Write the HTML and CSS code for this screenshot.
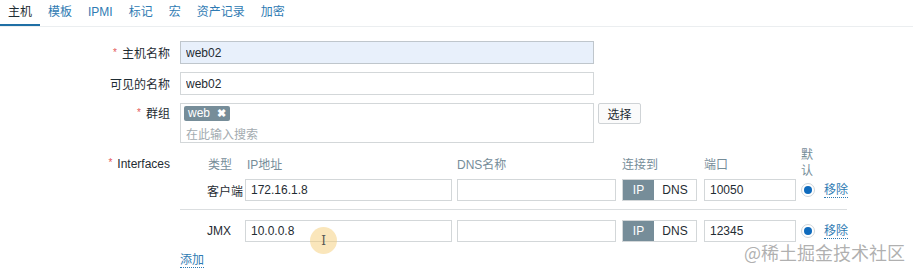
FILE: index.html
```html
<!DOCTYPE html>
<html lang="zh-CN">
<head>
    <meta charset="UTF-8">
    <title>主机</title>
    <link rel="stylesheet" href="styles.css">
</head>
<body>
    <div class="tabs">
        <span class="tab active">主机</span>
        <span class="tab">模板</span>
        <span class="tab">IPMI</span>
        <span class="tab">标记</span>
        <span class="tab">宏</span>
        <span class="tab">资产记录</span>
        <span class="tab">加密</span>
    </div>

    <div class="form">
        <div class="form-row">
            <label class="form-label required">主机名称</label>
            <input class="text-field wide focused" type="text" value="web02">
        </div>
        <div class="form-row">
            <label class="form-label">可见的名称</label>
            <input class="text-field wide" type="text" value="web02">
        </div>
        <div class="form-row group-row">
            <label class="form-label required">群组</label>
            <div class="multiselect">
                <span class="tag">web <span class="tag-x">&#10006;</span></span>
                <span class="placeholder">在此输入搜索</span>
            </div>
            <button class="btn">选择</button>
        </div>
        <div class="form-row iface-row">
            <label class="form-label required">Interfaces</label>
            <div class="iface-table">
                <div class="iface-head">
                    <span>类型</span>
                    <span class="pad">IP地址</span>
                    <span>DNS名称</span>
                    <span>连接到</span>
                    <span>端口</span>
                    <span class="stack"><span>默</span><span>认</span></span>
                    <span></span>
                </div>
                <div class="iface-line first">
                    <span class="iface-type">客户端</span>
                    <input class="text-field ip" type="text" value="172.16.1.8">
                    <input class="text-field dns" type="text" value="">
                    <div class="toggle"><span class="on">IP</span><span>DNS</span></div>
                    <input class="text-field port" type="text" value="10050">
                    <span class="radio"><span class="dot"></span></span>
                    <a class="link">移除</a>
                </div>
                <div class="iface-line">
                    <span class="iface-type">JMX</span>
                    <input class="text-field ip" type="text" value="10.0.0.8">
                    <input class="text-field dns" type="text" value="">
                    <div class="toggle"><span class="on">IP</span><span>DNS</span></div>
                    <input class="text-field port" type="text" value="12345">
                    <span class="radio"><span class="dot"></span></span>
                    <a class="link">移除</a>
                </div>
                <a class="link add">添加</a>
            </div>
        </div>
    </div>

    <div class="cursor-mark"><span>I</span></div>
    <div class="watermark">@稀土掘金技术社区</div>
</body>
</html>
```

FILE: styles.css
```css
* {
    margin: 0;
    padding: 0;
    box-sizing: border-box;
    font-family: "Liberation Sans", "Noto Sans CJK SC", sans-serif;
}

body {
    background: #ffffff;
    color: #1f2c33;
    font-size: 12px;
    position: relative;
    width: 913px;
    height: 275px;
    overflow: hidden;
}

.tabs {
    display: flex;
    height: 27px;
    border-bottom: 1px solid #ebeef0;
}

.tab {
    padding: 0 8px;
    line-height: 24px;
    height: 26px;
    color: #2f7bb3;
    border-bottom: 2px solid transparent;
}

.tab.active {
    color: #1f2c33;
    border-bottom-color: #1f6fa5;
}

.form {
    padding-top: 14px;
}

.form-row {
    display: flex;
    align-items: center;
    margin-bottom: 8px;
}

.form-label {
    width: 170px;
    text-align: right;
    margin-right: 10px;
    color: #1f2c33;
}

.form-label.required::before {
    content: "*";
    color: #e45959;
    margin-right: 5px;
    font-size: 10px;
    vertical-align: 2px;
}

.text-field {
    height: 23px;
    border: 1px solid #d3d7d9;
    background: #fff;
    padding: 0 5px;
    font-size: 12px;
    color: #1f2c33;
    outline: none;
}

.text-field.wide {
    width: 414px;
}

.text-field.focused {
    background: #e8f0fb;
    border-color: #bfc6cc;
}

.group-row {
    align-items: flex-start;
    margin-top: 2px;
}

.group-row .form-label {
    line-height: 20px;
}

.multiselect {
    width: 414px;
    height: 40px;
    border: 1px solid #d3d7d9;
    padding: 2px 3px;
    display: flex;
    flex-direction: column;
    align-items: flex-start;
}

.tag {
    background: #768d99;
    color: #fff;
    height: 15px;
    line-height: 15px;
    padding: 0 4px 0 4px;
    border-radius: 2px;
    font-size: 12px;
}

.tag-x {
    font-size: 11px;
    font-weight: bold;
    margin-left: 4px;
}

.placeholder {
    color: #a3abb0;
    margin-top: 4px;
    padding-left: 2px;
}

.btn {
    margin-left: 4px;
    width: 43px;
    height: 21px;
    border: 1px solid #cfd3d6;
    border-radius: 2px;
    background: #fbfbfb;
    color: #1f2c33;
    font-size: 12px;
}

.iface-row {
    align-items: flex-start;
    margin-top: 0;
}

.iface-row .form-label {
    margin-top: 6px;
}

.iface-table {
    width: 667px;
}

.iface-head,
.iface-line {
    display: grid;
    grid-template-columns: 65px 212px 165px 82px 97px 23px auto;
    align-items: center;
    white-space: nowrap;
}

.iface-head {
    color: #768d99;
    height: 28px;
    padding-bottom: 4px;
}

.iface-head > span:first-child {
    padding-left: 28px;
}

.iface-head .pad {
    padding-left: 2px;
}

.iface-head .stack {
    height: 0;
    display: flex;
    flex-direction: column;
    justify-content: center;
    line-height: 16px;
}

.iface-line.first {
    border-bottom: 1px solid #dbdee0;
    margin-bottom: 10px;
    padding-bottom: 8px;
}

.iface-type {
    padding-left: 27px;
}

.text-field.ip {
    width: 207px;
    height: 22px;
}

.text-field.dns {
    width: 159px;
    height: 22px;
}

.text-field.port {
    width: 92px;
    height: 22px;
}

.toggle {
    display: flex;
    width: 75px;
    height: 22px;
    border: 1px solid #d3d7d9;
}

.toggle span {
    flex: 1;
    text-align: center;
    line-height: 20px;
    color: #1f2c33;
}

.toggle .on {
    flex: 0 0 31px;
    background: #768d99;
    color: #fff;
}

.radio {
    width: 14px;
    height: 14px;
    border: 1px solid #cfd6da;
    border-radius: 50%;
    display: flex;
    align-items: center;
    justify-content: center;
}

.dot {
    width: 8px;
    height: 8px;
    border-radius: 50%;
    background: #0f6bbd;
}

.link {
    color: #2f7bb3;
    border-bottom: 1px dotted #2f7bb3;
    line-height: 14px;
    justify-self: start;
}

.link.add {
    display: inline-block;
    margin-top: 11px;
}

.cursor-mark {
    position: absolute;
    left: 310px;
    top: 227px;
    width: 27px;
    height: 27px;
    border-radius: 50%;
    background: rgba(245, 205, 120, 0.5);
    display: flex;
    align-items: center;
    justify-content: center;
}

.cursor-mark span {
    font-family: "DejaVu Serif", serif;
    font-size: 12px;
    color: #555;
}

.watermark {
    position: absolute;
    right: 8px;
    bottom: 10px;
    font-size: 18px;
    color: rgba(150, 150, 150, 0.75);
    font-family: "Noto Sans CJK SC", sans-serif;
}
```
